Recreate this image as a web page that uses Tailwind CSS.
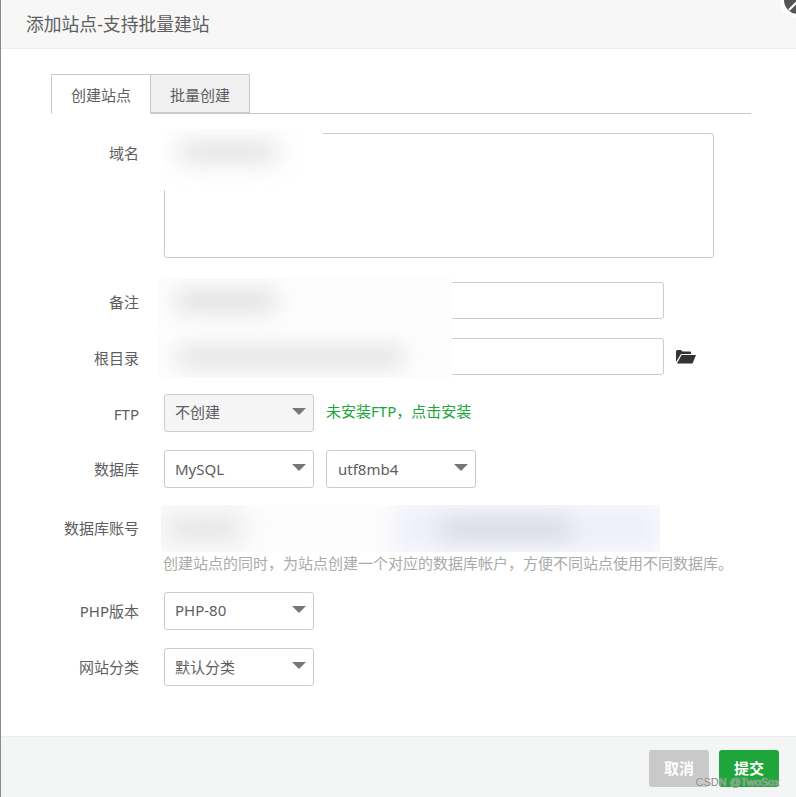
<!DOCTYPE html>
<html lang="zh-CN">
<head>
  <meta charset="UTF-8">
  <meta name="viewport" content="width=device-width, initial-scale=1.0">
  <title>添加站点</title>
  <script src="https://cdn.jsdelivr.net/npm/@tailwindcss/browser@4"></script>
</head>
<body class="bg-white font-['Noto_Sans','Noto_Sans_CJK_SC',sans-serif] text-[15px] text-[#5e5e5e]">
  <div class="relative w-[796px] h-[797px] overflow-hidden flex flex-col border-l border-[#8a8a8a]">
    <!-- close button, mostly cut off by the window -->
    <div class="absolute -right-[20px] -top-[18px] w-[36px] h-[36px] rounded-full bg-[#555] border-[4px] border-white flex items-center justify-center">
      <svg class="w-[12px] h-[12px] -ml-[10px] mt-[12px]" viewBox="0 0 12 12" stroke="#fff" stroke-width="2"><path d="M2 10L10 2"/></svg>
    </div>

    <header class="h-[49px] shrink-0 bg-[#f7f7f7] border-b border-[#eee] pl-[25px] flex items-center">
      <h1 class="text-[17.8px] leading-[48px] font-normal">添加站点-支持批量建站</h1>
    </header>

    <main class="flex-1 pl-[50px]">
      <!-- tabs -->
      <div class="mt-[25px] w-[700px] h-[40px] flex border-b border-[#c9c7d1]">
        <div class="w-[100px] h-[40px] border border-[#c9c7d1] border-b-white bg-white flex items-center justify-center pt-[3px]">创建站点</div>
        <div class="w-[99px] h-[39px] border border-l-0 border-[#c9c7d1] bg-[#f0f0f0] flex items-center justify-center pt-[4px]">批量创建</div>
      </div>

      <!-- form -->
      <div class="mt-[19px] flex flex-col">
        <div class="flex h-[125px]">
          <label class="w-[88px] text-right pt-[9px] leading-[22px]">域名</label>
          <textarea class="ml-[25px] w-[550px] h-[125px] border border-[#ccc] rounded-[3px] resize-none"></textarea>
        </div>
        <div class="flex items-center h-[37px] mt-[24px]">
          <label class="w-[88px] text-right pt-[4px]">备注</label>
          <input class="ml-[25px] w-[500px] h-[37px] border border-[#ccc] rounded-[3px]">
        </div>
        <div class="flex items-center h-[37px] mt-[19px]">
          <label class="w-[88px] text-right pt-[4px]">根目录</label>
          <input class="ml-[25px] w-[500px] h-[37px] border border-[#ccc] rounded-[3px]">
          <svg class="ml-[12px] w-[20px] h-[15px]" viewBox="0 0 20 15" fill="#333"><path d="M0 13V2.500Q0 1 1.500 1H5L6.500 2.500H14Q15 2.500 15 3.500V5H5L0 13Z"/><path d="M5.500 6H20L16.500 14.500H1L5.500 6Z"/></svg>
        </div>
        <div class="flex items-center h-[38px] mt-[19px]">
          <label class="w-[88px] text-right pt-[2px]">FTP</label>
          <div class="ml-[25px] w-[150px] h-[38px] border border-[#ccc] rounded-[3px] bg-[#f5f5f5] flex items-center justify-between pl-[10px] pr-[7px]">
            <span class="-mt-[2px]">不创建</span>
            <span class="mb-[3px] w-0 h-0 border-x-[7px] border-x-transparent border-t-[7px] border-t-[#777]"></span>
          </div>
          <a class="ml-[12px] -mt-[4px] text-[#20a53a]">未安装FTP，点击安装</a>
        </div>
        <div class="flex items-center h-[38px] mt-[18px]">
          <label class="w-[88px] text-right">数据库</label>
          <div class="ml-[25px] w-[150px] h-[38px] border border-[#ccc] rounded-[3px] flex items-center justify-between pl-[10px] pr-[7px]">
            <span>MySQL</span>
            <span class="mb-[3px] w-0 h-0 border-x-[7px] border-x-transparent border-t-[7px] border-t-[#777]"></span>
          </div>
          <div class="ml-[12px] w-[150px] h-[38px] border border-[#ccc] rounded-[3px] flex items-center justify-between pl-[11px] pr-[7px]">
            <span>utf8mb4</span>
            <span class="mb-[3px] w-0 h-0 border-x-[7px] border-x-transparent border-t-[7px] border-t-[#777]"></span>
          </div>
        </div>
        <div class="flex items-center h-[38px] mt-[21px]">
          <label class="w-[88px] text-right whitespace-nowrap">数据库账号</label>
        </div>
        <p class="ml-[112px] mt-[5px] leading-[22px] text-[#aaa] whitespace-nowrap">创建站点的同时，为站点创建一个对应的数据库帐户，方便不同站点使用不同数据库。</p>
        <div class="flex items-center h-[38px] mt-[18px]">
          <label class="w-[88px] text-right">PHP版本</label>
          <div class="ml-[25px] w-[150px] h-[38px] border border-[#ccc] rounded-[3px] flex items-center justify-between pl-[10px] pr-[7px]">
            <span class="-mt-[2px]">PHP-80</span>
            <span class="mb-[3px] w-0 h-0 border-x-[7px] border-x-transparent border-t-[7px] border-t-[#777]"></span>
          </div>
        </div>
        <div class="flex items-center h-[38px] mt-[18px]">
          <label class="w-[88px] text-right">网站分类</label>
          <div class="ml-[25px] w-[150px] h-[38px] border border-[#ccc] rounded-[3px] flex items-center justify-between pl-[10px] pr-[7px]">
            <span>默认分类</span>
            <span class="mb-[3px] w-0 h-0 border-x-[7px] border-x-transparent border-t-[7px] border-t-[#777]"></span>
          </div>
        </div>
      </div>
    </main>

    <footer class="h-[61px] shrink-0 bg-[#f4f6f6] border-t border-[#eee] flex justify-end gap-[10px] pt-[13px] pr-[16px]">
      <button class="w-[60px] h-[37px] rounded-[3px] bg-[#c9c9c9] text-white font-bold -translate-x-px">取消</button>
      <button class="w-[60px] h-[37px] rounded-[3px] bg-[#20a53a] text-white font-bold -translate-x-px">提交</button>
    </footer>

    <!-- blurred-out patches over the private values -->
    <div class="absolute left-[161px] top-[129px] w-[161px] h-[61px] bg-white overflow-hidden">
      <div class="absolute left-[16px] top-[14px] w-[100px] h-[18px] bg-[#dcdcdc] blur-[12px]"></div>
    </div>
    <div class="absolute left-[157px] top-[278px] w-[294px] h-[100px] bg-[#fdfdfd] overflow-hidden">
      <div class="absolute left-[18px] top-[13px] w-[100px] h-[20px] bg-[#dedede] blur-[11px]"></div>
      <div class="absolute left-[20px] top-[70px] w-[225px] h-[18px] bg-[#dedede] blur-[11px]"></div>
    </div>
    <div class="absolute left-[160px] top-[505px] w-[499px] h-[47px] bg-[#fcfcfc] overflow-hidden">
      <div class="absolute left-[5px] top-[12px] w-[75px] h-[24px] bg-[#e2e2e2] blur-[12px]"></div>
      <div class="absolute left-[235px] top-0 w-[264px] h-[47px] bg-[#eef1fa] blur-[10px]"></div>
      <div class="absolute left-[280px] top-[14px] w-[130px] h-[20px] bg-[#d5d8e2] blur-[11px]"></div>
    </div>

    <!-- watermark -->
    <div class="absolute right-[16px] bottom-[8px] text-[11px] leading-[14px] text-[#8a8a8a] [text-shadow:0_0_1px_#eee] font-['Liberation_Sans',sans-serif] whitespace-nowrap">CSDN @TwoSox</div>
  </div>
</body>
</html>
